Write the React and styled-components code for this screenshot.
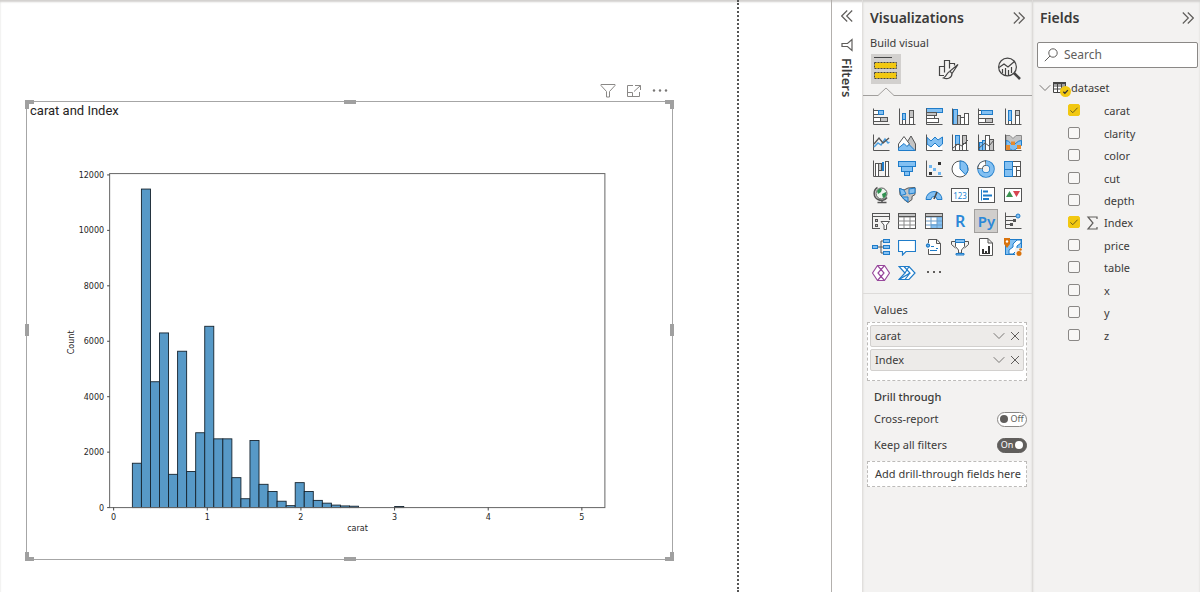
import React, { useState } from "react";
import styled, { createGlobalStyle, css } from "styled-components";

const GlobalStyle = createGlobalStyle`
  *, *::before, *::after { box-sizing: border-box; }
  body {
    margin: 0;
    background: #fff;
    color: #3b3a39;
    font-family: "Noto Sans", "Open Sans", sans-serif;
    font-size: 11px;
    line-height: 16px;
  }
  button, input { font: inherit; color: inherit; }
  button { padding: 0; border: 0; background: none; cursor: pointer; }
  svg { display: block; }
`;

const G = "#555555";
const L = "#c4c4c4";
const B = "#83c0f2";
const S = "#1f7cc9";
const W = "#ffffff";

/* ---------- layout ---------- */

const Shell = styled.div`
  display: flex;
  min-height: 100vh;
  box-shadow: inset 0 2px 2px #d2d0ce;
`;

const Canvas = styled.main`
  flex: 1;
  min-width: 0;
  padding-right: 92px;
  display: flex;
`;

const Page = styled.section`
  flex: 1;
  min-width: 0;
  padding: 80px 64px 31px 26px;
  border-right: 2px dotted #555;
`;

const VisualActions = styled.div`
  display: flex;
  justify-content: flex-end;
  align-items: center;
  gap: 10px;
  height: 21px;
  padding-right: 5px;
`;

const Visual = styled.article`
  position: relative;
  border: 1px solid #a6a6a6;
`;

const VisualTitle = styled.h1`
  margin: 0;
  padding: 0 3px;
  font-family: Roboto, sans-serif;
  font-size: 13px;
  font-weight: 400;
  line-height: 17px;
  color: #252423;
`;

const ChartSvg = styled.svg`
  width: 100%;
  height: auto;
  font-family: "DejaVu Sans", sans-serif;
  font-size: 8px;
  fill: #262626;
`;

const corners = {
  nw: css`top: -2px; left: -2px; border-width: 4px 0 0 4px;`,
  ne: css`top: -2px; right: -2px; border-width: 4px 4px 0 0;`,
  sw: css`bottom: -2px; left: -2px; border-width: 0 0 4px 4px;`,
  se: css`bottom: -2px; right: -2px; border-width: 0 4px 4px 0;`,
  n: css`top: -2px; left: calc(50% - 6px); width: 12px; height: 4px; background: #a0a0a0;`,
  s: css`bottom: -2px; left: calc(50% - 6px); width: 12px; height: 4px; background: #a0a0a0;`,
  w: css`left: -2px; top: calc(50% - 6px); width: 4px; height: 12px; background: #a0a0a0;`,
  e: css`right: -2px; top: calc(50% - 6px); width: 4px; height: 12px; background: #a0a0a0;`,
};

const Handle = styled.span`
  position: absolute;
  width: 9px;
  height: 9px;
  border: 0 solid #a0a0a0;
  ${(p) => corners[p.$at]}
`;

const FiltersStrip = styled.aside`
  flex: none;
  width: 32px;
  border-left: 1px solid #b3b0ad;
  border-right: 1px solid #e1dfdd;
  padding-top: 10px;
  display: flex;
  flex-direction: column;
  align-items: center;
  gap: 14px;
`;

const VerticalTitle = styled.h2`
  margin: 0;
  margin-top: -10px;
  writing-mode: vertical-rl;
  font-size: 13px;
  font-weight: 600;
  line-height: 18px;
`;

const Pane = styled.aside`
  flex: none;
  width: ${(p) => p.$width}px;
  background: #f3f2f1;
  box-shadow: inset 0 2px 2px #d2d0ce;
  border-right: ${(p) => (p.$divided ? "1px solid #dddbd9" : "0")};
`;

const PaneHeader = styled.header`
  display: flex;
  align-items: center;
  justify-content: space-between;
  height: 36px;
  padding: 0 ${(p) => p.$end}px 0 7px;
`;

const PaneTitle = styled.h2`
  margin: 0;
  font-size: 14px;
  font-weight: 600;
  line-height: 20px;
`;

const SubTitle = styled.p`
  margin: 0;
  padding: 0 7px;
  height: 18px;
  line-height: 14px;
`;

/* ---------- visualizations pane ---------- */

const Tabs = styled.div`
  position: relative;
  display: flex;
  justify-content: space-between;
  height: 42px;
  padding: 0 8px;
  border-bottom: 1px solid #a19f9d;
`;

const Tab = styled.button`
  display: grid;
  place-items: center;
  width: 30px;
  height: 30px;
  background: ${(p) => (p.$active ? "#d2d0ce" : "none")};
`;

const Notch = styled.svg`
  position: absolute;
  left: 15px;
  bottom: -1px;
`;

const VisualGrid = styled.div`
  display: grid;
  grid-template-columns: repeat(6, 1fr);
  grid-auto-rows: 26px;
  place-items: center;
  padding: 8px 6px 7px 5px;
  border-bottom: 1px solid #dddbd9;
`;

const VisualButton = styled.button`
  display: grid;
  place-items: center;
  width: 24px;
  height: 24px;
  border: 1px solid ${(p) => (p.$active ? "#a19f9d" : "transparent")};
  background: ${(p) => (p.$active ? "#d0cecc" : "none")};
  color: #2b88d8;
  font-size: ${(p) => (p.$active ? 15 : 16)}px;
  font-weight: 600;
  line-height: 18px;
`;

const Section = styled.section`
  padding: 7px 5px 0 4px;
`;

const SectionTitle = styled.h3`
  margin: 0;
  padding: 0 7px;
  font-size: 11px;
  font-weight: ${(p) => (p.$strong ? 500 : 400)};
  line-height: 18px;
`;

const Well = styled.div`
  display: flex;
  flex-direction: column;
  gap: 2px;
  min-height: 59px;
  margin-top: 3px;
  padding: 2px;
  border: 1px dashed #bdbbb9;
  background: #fff;
`;

const WellItem = styled.div`
  display: flex;
  align-items: center;
  gap: 5px;
  height: 22px;
  padding: 0 3px 0 4px;
  border: 1px solid #d2d0ce;
  border-radius: 2px;
  background: #edebe9;
`;

const WellName = styled.span`
  flex: 1;
`;

const SwitchRow = styled.label`
  display: flex;
  align-items: center;
  justify-content: space-between;
  height: 26px;
  padding-left: 7px;
`;

const SwitchInput = styled.input`
  position: absolute;
  opacity: 0;
  width: 1px;
  height: 1px;
  margin: 0;
`;

const Track = styled.span`
  display: flex;
  flex-direction: ${(p) => (p.$on ? "row-reverse" : "row")};
  align-items: center;
  justify-content: center;
  gap: 2px;
  width: 30px;
  height: 15px;
  border: 1px solid ${(p) => (p.$on ? "#605e5c" : "#8a8886")};
  border-radius: 8px;
  background: ${(p) => (p.$on ? "#605e5c" : "#fff")};
  color: ${(p) => (p.$on ? "#fff" : "#605e5c")};
  font-size: 9px;
  line-height: 12px;

  &::before {
    content: "";
    width: 8px;
    height: 8px;
    border-radius: 50%;
    background: ${(p) => (p.$on ? "#fff" : "#605e5c")};
  }
`;

const DropZone = styled.div`
  height: 26px;
  margin-top: 3px;
  padding: 0 7px;
  border: 1px dashed #bdbbb9;
  background: #fff;
  line-height: 24px;
  white-space: nowrap;
`;

/* ---------- fields pane ---------- */

const SearchBox = styled.label`
  display: flex;
  align-items: center;
  gap: 6px;
  height: 26px;
  margin: 6px 2px 0 4px;
  padding: 0 6px;
  border: 1px solid #8a8886;
  border-radius: 2px;
  background: #fff;
`;

const SearchInput = styled.input`
  flex: 1;
  min-width: 0;
  padding: 0;
  border: 0;
  outline: 0;
  background: none;
  font-size: 12px;
  &::placeholder { color: #605e5c; opacity: 1; }
`;

const TableRow = styled.button`
  display: flex;
  align-items: center;
  height: 24px;
  margin-top: 8px;
  padding-left: 6px;
`;

const TableIcon = styled.span`
  margin: 0 0 0 2px;
`;

const FieldList = styled.ul`
  display: grid;
  grid-auto-rows: 1fr;
  height: 247px;
  margin: 0;
  padding: 0;
  list-style: none;
`;

const FieldRow = styled.label`
  display: grid;
  grid-template-columns: 12px 12px 1fr;
  column-gap: 6px;
  align-items: center;
  height: 100%;
  padding-left: 35px;
`;

const FieldName = styled.span`
  grid-column: 3;
  grid-row: 1;
`;

const FieldCheck = styled.input`
  appearance: none;
  width: 12px;
  height: 12px;
  margin: 0;
  border: 1px solid #8a8886;
  border-radius: 2px;
  background: #f8f7f6;

  &:checked {
    border-color: #f2c811;
    background: #f2c811;
  }
`;

const CheckCell = styled.span`
  display: grid;
  place-items: center;
  padding-bottom: 2px;
  > * { grid-area: 1 / 1; }
  > svg { pointer-events: none; }
`;

const IconButton = styled.button`
  display: grid;
  place-items: center;
`;

/* ---------- small icons ---------- */

const Line = ({ w, h, d, color = "#605e5c", sw = 1, children }) => (
  <svg width={w} height={h} viewBox={`0 0 ${w} ${h}`} fill="none" stroke={color} strokeWidth={sw}>
    {d && <path d={d} />}
    {children}
  </svg>
);

const DoubleRight = () => <Line w={12} h={12} sw={1.2} d="M.8 .5 6.3 6 .8 11.5M5.8 .5 11.3 6 5.8 11.5" />;
const DoubleLeft = () => <Line w={12} h={12} sw={1.2} d="M6.2 .5 .7 6l5.5 5.5M11.2 .5 5.7 6l5.5 5.5" />;
const ChevronDown = () => <Line w={12} h={12} color="#797775" d="M.7 3.2 6 8.5l5.3-5.3" />;
const Close = () => <Line w={10} h={10} d="m1 1 8 8M9 1 1 9" />;
const Check = ({ color = "#6b5d1c" }) => <Line w={12} h={12} color={color} d="m2.4 6.4 2.4 2.3 4.8-5" />;

/* ---------- visual type icons, on an 18px grid ---------- */

const axis = <path d="M1.5 .5V16.5H17.5" fill="none" stroke={G} />;
const R = ({ x, y, w, h, f = W, s = G }) => (
  <rect x={x} y={y} width={w} height={h} fill={f} stroke={s} />
);
const P = ({ d, f = "none", s = G, sw = 1 }) => <path d={d} fill={f} stroke={s} strokeWidth={sw} />;
const C = ({ x, y, r, f = "none", s = G, sw = 1 }) => (
  <circle cx={x} cy={y} r={r} fill={f} stroke={s} strokeWidth={sw} />
);

const visuals = [
  ["Stacked bar chart", <><R x={1.5} y={2.5} w={5} h={4} /><R x={6.5} y={2.5} w={5} h={4} f={B} s={S} /><R x={1.5} y={9.5} w={7} h={4} /><R x={8.5} y={9.5} w={7} h={4} f={L} />{axis}</>],
  ["Stacked column chart", <><R x={4.5} y={11.5} w={3} h={5} /><R x={4.5} y={5.5} w={3} h={6} f={B} s={S} /><R x={11.5} y={9.5} w={4} h={7} /><R x={11.5} y={2.5} w={4} h={7} f={L} />{axis}</>],
  ["Clustered bar chart", <><R x={1.5} y={.5} w={16} h={4} f={B} s={S} /><R x={1.5} y={4.5} w={10} h={3} f={L} /><R x={1.5} y={7.5} w={8} h={3} /><R x={1.5} y={10.5} w={12} h={4} />{axis}</>],
  ["Clustered column chart", <><R x={2.5} y={1.5} w={4} h={15} f={B} s={S} /><R x={6.5} y={7.5} w={3} h={9} f={L} /><R x={9.5} y={9.5} w={4} h={7} /><R x={13.5} y={5.5} w={4} h={11} />{axis}</>],
  ["100% stacked bar chart", <><R x={1.5} y={2.5} w={4} h={4} /><R x={4.5} y={2.5} w={11} h={4} f={B} s={S} /><R x={1.5} y={10.5} w={7} h={4} /><R x={8.5} y={10.5} w={7} h={4} f={L} />{axis}</>],
  ["100% stacked column chart", <><R x={4.5} y={12.5} w={3} h={4} /><R x={4.5} y={2.5} w={3} h={10} f={B} s={S} /><R x={11.5} y={7.5} w={4} h={9} /><R x={11.5} y={2.5} w={4} h={5} f={L} />{axis}</>],

  ["Line chart", <>{axis}<P d="M2 13 6 9l3 2 4-6 3 4 1.500-1" s="#4a9fe0" sw={1.500} /><P d="M2 10 7 4l4 5 6-5" s={G} sw={1.300} /></>],
  ["Area chart", <><P d="M8 10 13 2l4.500 8v6.500H8Z" f={L} /><P d="M.5 10 6 2.500 11.500 10 7 15H.5Z" f={W} /><P d="M.5 16.500V14L6 9.500l3 3 2-2 6 6Z" f={B} s={S} /></>],
  ["Stacked area chart", <><P d="M2 10v6.500h15V10" f={W} s="none" /><P d="M2 3.500 6 7l4-4 3 3 4.500-3v7L14 13l-4-4-4 4-4-3Z" f={B} s={S} />{axis}</>],
  ["Line and stacked column chart", <><R x={4.5} y={1.5} w={4} h={9} f={B} s={S} /><R x={4.5} y={10.5} w={4} h={6} /><R x={11.5} y={1.5} w={4} h={8} f={L} /><R x={11.5} y={9.5} w={4} h={7} />{axis}<P d="m2 14 5-4 4 2 6-6" s={G} /></>],
  ["Line and clustered column chart", <><R x={2.500} y={8.500} w={3} h={8} f={B} s={S} /><R x={5.500} y={6.500} w={3} h={10} f={B} s={S} /><R x={8.500} y={1.500} w={4} h={15} /><R x={12.500} y={5.500} w={4} h={11} f={L} />{axis}<P d="m2 14 6-5 4 3 5-6" s={G} /></>],
  ["Ribbon chart", <><P d="M2 1.500h4l3 3 3-3h5.500V7l-5 4H6L2 7Z" f={L} s="#8a8a8a" /><P d="M2 6.500c4 0 4 4 7 4s4-4 8.500-4v5c-4 0-5 5-8.500 5s-4-5-7-5Z" f={B} s={S} /><path d="M2 11h4v5H2ZM7 7.500h4v3.500H7ZM13 11h4v4h-4Z" fill="#e58a2e" />{axis}</>],

  ["Waterfall chart", <><R x={3.500} y={3.500} w={3} h={13} /><R x={6.500} y={3.500} w={3} h={7} f={L} /><R x={10.500} y={2.500} w={1} h={8} f={B} s={S} /><R x={13.500} y={1.500} w={3} h={15} />{axis}</>],
  ["Funnel", <><R x={.5} y={1.5} w={17} h={5} f={B} s={S} /><R x={3.5} y={6.5} w={11} h={5} f={B} s={S} /><R x={6.5} y={11.5} w={5} h={4} f={B} s={S} /></>],
  ["Scatter chart", <>{axis}<g fill="#333"><rect x="13" y="2" width="3" height="3" /><rect x="4" y="12" width="3" height="3" /></g><g fill="#6fb6f0"><rect x="4" y="5" width="3" height="3" /><rect x="8" y="8" width="3" height="3" /><rect x="13" y="12" width="3" height="3" /></g></>],
  ["Pie chart", <><C x={9} y={9} r={8} f={W} /><P d="M9 1a8 8 0 0 1 5.500 13.800L9 9Z" f={B} s={S} /></>],
  ["Donut chart", <><C x={9} y={9} r={6} s={S} sw={5.5} /><C x={9} y={9} r={6} s={B} sw={3.8} /><P d="M9 3a6 6 0 0 0-6 6" s={G} sw={5.500} /><P d="M8.300 3.100a6 6 0 0 0-5.200 5.200" s={W} sw={3.800} /></>],
  ["Treemap", <><R x={8.5} y={1.5} w={8} h={5} /><R x={8.5} y={6.5} w={4} h={10} /><R x={12.5} y={6.5} w={4} h={4} /><R x={12.5} y={10.5} w={4} h={6} /><R x={.5} y={1.5} w={8} h={8} f={B} s={S} /><R x={.5} y={9.5} w={8} h={7} f={B} s={S} /></>],

  ["Map", <><C x={9.5} y={7.5} r={5.5} f="#eef5ef" /><path d="M5 5c2-3 4-3 5-2l-1 3-3 2ZM10 8l4-2c1 3-1 6-3 6Z" fill="#2f9150" /><P d="M5.500 1.500C1 4 1 11 6 13.500c3 1.500 7 1 9-2M10 14.500v2M5.500 16.500h9" sw={1.500} /></>],
  ["Filled map", <><P d="M1.500 2.500 6 4l4-2 7-.5v7l-3 2v3l-4 3-4-3-4-5Z" f={L} /><P d="M1.500 2.500 6 4l2 4-5 1.500Z" f={B} s={S} /><P d="m11 8 6-1v-5l-6 1ZM4 11h6v5l-4-3Z" f={B} s={S} /></>],
  ["Gauge", <><P d="M1 13.500a8 8 0 0 1 16 0h-5a3 3 0 0 0-6 0Z" f={B} s={S} /><P d="M9 13 12 6" s="#444" sw={1.600} /></>],
  ["Card", <><R x={.5} y={2.5} w={17} h={13} /><text x="9" y="12.5" textAnchor="middle" fontSize="8" fontWeight="400" fill="#1f8ad8">123</text></>],
  ["Multi-row card", <><R x={1.5} y={1.5} w={16} h={15} /><P d="M4.500 3.500v11" s={S} /><P d="M6 5.500h5M6 9.500h9M6 13h6" s={S} sw={2} /></>],
  ["KPI", <><R x={.5} y={2.5} w={17} h={13} /><path d="m2 11 3.500-6L9 11Z" fill="#3b9350" /><path d="m9 5 3.500 6L16 5Z" fill="#d64550" /></>],

  ["Slicer", <><R x={.5} y={1.5} w={17} h={15} f="none" /><P d="M.5 4.500h17" /><R x={3.5} y={7.5} w={2} h={2} f={L} /><R x={3.5} y={12.500} w={2} h={2} f={L} /><path d="M8 8h10v10H8Z" fill="#f3f2f1" /><P d="M9 9.500h8.500L14.500 13v4.500h-2.500V13Z" f={W} /></>],
  ["Table", <><R x={.5} y={1.5} w={17} h={15} /><P d="M.5 5h17M.5 9h17M.5 13h17M6 5v11.500M12 5v11.500" s="#8a8a8a" /><R x={.5} y={1.5} w={17} h={3} f={L} /></>],
  ["Matrix", <><R x={.5} y={1.5} w={17} h={15} /><path d="M12 5h5v11h-11v-4h6Z" fill={B} /><P d="M.5 5h17M.5 9h17M.5 13h17M6 5v11.500M12 5v11.500" s="#6a9cc8" /><P d="M.5 4.500v-3h17v3ZM.5 4.500v12h17v-12" f="none" /><path d="M1 2h16v2H1Z" fill={L} /></>],
  ["R script visual", "R"],
  ["Python visual", "Py"],
  ["Key influencers", <><P d="M1.500 .5v16h16" s={G} /><P d="M2 4.500h10M2 8.500h8M2 12.500h5" /><C x={14} y={4} r={2} f={B} s={S} /><rect x="9" y="7" width="3" height="3" fill={G} /><rect x="6" y="11" width="3" height="3" fill={G} /></>],

  ["Decomposition tree", <><P d="M6 9H9M9 9h3M9 3v12M9 3h3M9 15h3" s={G} /><R x={.5} y={7.5} w={5} h={3} f={B} s={S} /><R x={11.5} y={1.5} w={6} h={3} f={B} s={S} /><R x={11.5} y={7.5} w={6} h={3} f={B} s={S} /><R x={11.5} y={13.5} w={6} h={3} f={B} s={S} /></>],
  ["Q&A", <P d="M.5 2.500h17v11H8L4.500 17v-3.500h-4Z" f={W} s={S} sw={1.200} />],
  ["Narrative", <><P d="M3.500 5V1.500H12l3.500 4v11h-12V11M11.500 1.500v4h4" f={W} /><C x={3} y={7.500} r={1.500} f={B} s={S} sw={1.300} /><P d="M6 8.500h3M11 10.500h2M5 12.500h7" s={S} /></>],
  ["Metrics", <><P d="M4.500 3.500h-4v3l4 3.500M13.500 3.500h4v3l-4 3.500" f="none" /><P d="M4.500 1.500h9v7L10.500 12v3h-3v-3l-3-3.500Z" f={W} /><P d="M4.500 1.500h9v3h-9ZM5 15.500h8v1.500H5Z" f={B} s={S} /></>],
  ["Paginated report", <><P d="M2.500 .5H11l4.500 4.500v12.500h-13ZM11 .5V5h4.500" f={W} /><path d="M5 11h2v4H5ZM8 13h2v2H8ZM11 8h2v7h-2ZM5 15h8v1H5Z" fill="#333" /></>],
  ["ArcGIS map", <><R x={1.5} y={1.5} w={16} h={15} s={S} f={B} /><P d="M5 16V12l4-3V6l4-4h4v3l-4 3v4l-4 4Z" f={W} s={S} /><path d="M0 0h6v6L3 10 0 6Z" fill="#d9730d" /><circle cx="3" cy="3.5" r="1.2" fill={W} /><path d="M11 10h7v8h-7Z" fill="#f3f2f1" /><circle cx="15" cy="15.500" r="2.500" fill="#d9730d" /><circle cx="16.500" cy="11.500" r="1.300" fill="#d9730d" /></>],

  ["Power Apps", <><P d="M5.500 1.500 .5 9l5 7.500h7l5-7.500-5-7.500Z" f={W} s="#98489c" sw={1.200} /><P d="m5.500 1.500 3.500 4-3 3.500 3 3.500-3.500 4M12.500 1.500 9 5.500l3 3.500-3 3.500 3.500 4" s="#98489c" sw={1.200} /></>],
  ["Power Automate", <><P d="M1 2.500h10l6 6.500-6 6.500H1L7 9Z" f={W} s={S} sw={1.200} /><P d="m6 2.500 6 6.500-11 6.500M11 2.500 7 9M12 9l-5 6.500" s={S} sw={1.200} /></>],
  ["More visuals", <g fill="#605e5c"><rect x="2" y="7" width="2" height="2" /><rect x="8" y="7" width="2" height="2" /><rect x="14" y="7" width="2" height="2" /></g>],
];

/* ---------- histogram ---------- */

const counts = [
  1600, 11490, 4540, 6300, 1200, 5640, 1300, 2700, 6540, 2480, 2480, 1080, 320, 2420, 840,
  580, 230, 70, 900, 580, 260, 160, 90, 60, 50, 0, 0, 0, 0, 40,
];
const binWidth = 0.0966;
const px = (v) => 86.5 + v * 93.5;
const py = (n) => 388 - n * 0.02768;

function Histogram() {
  return (
    <ChartSvg viewBox="0 0 644 439" role="img" aria-label="Histogram of carat">
      {counts.map((n, i) =>
        n ? (
          <rect
            key={i}
            x={px(0.2 + i * binWidth)}
            y={py(n)}
            width={binWidth * 93.5}
            height={388 - py(n)}
            fill="#5799c7"
            stroke="#16242f"
            strokeWidth="0.9"
          />
        ) : null
      )}
      <rect x="82.500" y="54.500" width="494.500" height="333.500" fill="none" stroke="#666" strokeWidth="1" />
      {[0, 2000, 4000, 6000, 8000, 10000, 12000].map((n) => (
        <g key={n}>
          <path d={`M80 ${py(n)}h2.500`} stroke="#444" />
          <text x="77" y={py(n) + 3} textAnchor="end">{n}</text>
        </g>
      ))}
      {[0, 1, 2, 3, 4, 5].map((v) => (
        <g key={v}>
          <path d={`M${px(v)} 388v3`} stroke="#444" />
          <text x={px(v)} y="400" textAnchor="middle">{v}</text>
        </g>
      ))}
      <text x="330" y="411" textAnchor="middle">carat</text>
      <text transform="translate(47 223) rotate(-90)" textAnchor="middle">Count</text>
    </ChartSvg>
  );
}

/* ---------- fields ---------- */

const fieldNames = ["carat", "clarity", "color", "cut", "depth", "Index", "price", "table", "x", "y", "z"];

function Field({ name, checked, onToggle }) {
  return (
    <li>
      <FieldRow>
        <CheckCell>
          <FieldCheck type="checkbox" checked={checked} onChange={onToggle} />
          {checked && <Check />}
        </CheckCell>
        {name === "Index" && <Line w={12} h={14} sw={1.2} d="M11 3V1H2l5 6-5 6h9v-2" />}
        <FieldName>{name}</FieldName>
      </FieldRow>
    </li>
  );
}

function Switch({ label, on, onToggle }) {
  return (
    <SwitchRow>
      {label}
      <SwitchInput type="checkbox" role="switch" checked={on} onChange={onToggle} />
      <Track $on={on}>{on ? "On" : "Off"}</Track>
    </SwitchRow>
  );
}

export default function App() {
  const [picked, setPicked] = useState(["carat", "Index"]);
  const [cross, setCross] = useState(false);
  const [keep, setKeep] = useState(true);
  const toggle = (n) =>
    setPicked((p) => (p.includes(n) ? p.filter((x) => x !== n) : [...p, n]));

  return (
    <Shell>
      <GlobalStyle />
      <Canvas>
        <Page>
          <VisualActions>
            <IconButton aria-label="Filters on this visual">
              <Line w={16} h={16} color="#8a8886" d="M1 1.500h14v1L9.500 8.500v5.500h-3V8.500L1 2.500Z" />
            </IconButton>
            <IconButton aria-label="Focus mode">
              <Line w={16} h={16} color="#8a8886" d="M7 2.500H1.500v11h12V9M1.500 9.500h5v4M9 2.500h5.500V7M14.500 2.500 8 8.500" />
            </IconButton>
            <IconButton aria-label="More options">
              <svg width="16" height="16" viewBox="0 0 16 16" fill="#797775">
                <circle cx="2" cy="7.500" r="1.200" /><circle cx="8" cy="7.500" r="1.200" /><circle cx="14" cy="7.500" r="1.200" />
              </svg>
            </IconButton>
          </VisualActions>
          <Visual>
            <VisualTitle>carat and Index</VisualTitle>
            <Histogram />
            {Object.keys(corners).map((c) => <Handle key={c} $at={c} />)}
          </Visual>
        </Page>
      </Canvas>

      <FiltersStrip>
        <IconButton aria-label="Expand filters"><DoubleLeft /></IconButton>
        <Line w={12} h={18} sw={1.200} d="M11 3.500v11L6.500 10.500H1v-3h5.500Z" />
        <VerticalTitle>Filters</VerticalTitle>
      </FiltersStrip>

      <Pane $width={170} $divided>
        <PaneHeader $end={7}>
          <PaneTitle>Visualizations</PaneTitle>
          <IconButton aria-label="Collapse visualizations"><DoubleRight /></IconButton>
        </PaneHeader>
        <SubTitle>Build visual</SubTitle>
        <Tabs>
          <Tab $active aria-label="Build visual">
            <svg width="24" height="24" viewBox="0 0 24 24">
              <path d="M0 .5h18" stroke="#444" />
              <path d="M.5 5.500h22v6H.5ZM.5 15.500h22v6H.5Z" fill="#f2c811" stroke="#444" strokeDasharray="2 1" />
            </svg>
          </Tab>
          <Tab aria-label="Format visual">
            <Line w={24} h={24} color="#444" sw={1.200}>
              <path d="M8 18.500H3.500v-9h5v6M8.500 14V3.500h5v8M13.500 6.500h5v2" />
              <path d="M22 7.500 14 14l2 2.500 6-9ZM14 14.500c-3 0-3 5-6.500 6.500 4 1.500 8.500 0 8.500-4.500" fill="#f3f2f1" />
            </Line>
          </Tab>
          <Tab aria-label="Analytics">
            <Line w={24} h={24} color="#444" sw={1.200}>
              <circle cx="10.500" cy="10" r="8.900" />
              <path d="M2 10.500 7 7l4 3 7-6M5.500 12v4M8.500 11v7M11.500 13v6M14.500 10v6" />
              <path d="m17 16 6 6" strokeWidth="2.600" />
            </Line>
          </Tab>
          <Notch width="16" height="9" viewBox="0 0 16 9">
            <path d="M0 8.500 8 .8l8 7.700V9H0Z" fill="#f3f2f1" />
            <path d="M0 8.500 8 1l8 7.500" fill="none" stroke="#a19f9d" />
          </Notch>
        </Tabs>

        <VisualGrid>
          {visuals.map(([name, art]) => (
            <VisualButton key={name} aria-label={name} $active={name === "Python visual"}>
              {typeof art === "string" ? art : <svg width="18" height="18" viewBox="0 0 18 18">{art}</svg>}
            </VisualButton>
          ))}
        </VisualGrid>

        <Section>
          <SectionTitle>Values</SectionTitle>
          <Well>
            {["carat", "Index"].map((n) => (
              <WellItem key={n}>
                <WellName>{n}</WellName>
                <IconButton aria-label={`${n} options`}><ChevronDown /></IconButton>
                <IconButton aria-label={`Remove ${n}`}><Close /></IconButton>
              </WellItem>
            ))}
          </Well>
        </Section>
        <Section>
          <SectionTitle $strong>Drill through</SectionTitle>
          <Switch label="Cross-report" on={cross} onToggle={() => setCross(!cross)} />
          <Switch label="Keep all filters" on={keep} onToggle={() => setKeep(!keep)} />
          <DropZone>Add drill-through fields here</DropZone>
        </Section>
      </Pane>

      <Pane $width={167}>
        <PaneHeader $end={6}>
          <PaneTitle>Fields</PaneTitle>
          <IconButton aria-label="Collapse fields"><DoubleRight /></IconButton>
        </PaneHeader>
        <SearchBox>
          <Line w={14} h={14}>
            <circle cx="9" cy="5" r="4.200" />
            <path d="M6 8 .8 13.200" />
          </Line>
          <SearchInput type="search" placeholder="Search" aria-label="Search" />
        </SearchBox>
        <TableRow>
          <ChevronDown />
          <TableIcon>
            <svg width="18" height="18" viewBox="0 0 18 18">
              <path d="M.5 3.500h12v10H.5ZM.5 7h12M.5 10h12M4.500 4v9.500M8.500 4v9.500" fill={W} stroke="#444" />
              <path d="M0 3h13v2.500H0Z" fill="#444" />
              <circle cx="12.500" cy="12.500" r="5.500" fill="#f2c811" />
              <path d="m10.300 12.700 1.600 1.600 3-3.200" fill="none" stroke="#333" strokeWidth="1.300" />
            </svg>
          </TableIcon>
          dataset
        </TableRow>
        <FieldList>
          {fieldNames.map((n) => (
            <Field key={n} name={n} checked={picked.includes(n)} onToggle={() => toggle(n)} />
          ))}
        </FieldList>
      </Pane>
    </Shell>
  );
}
